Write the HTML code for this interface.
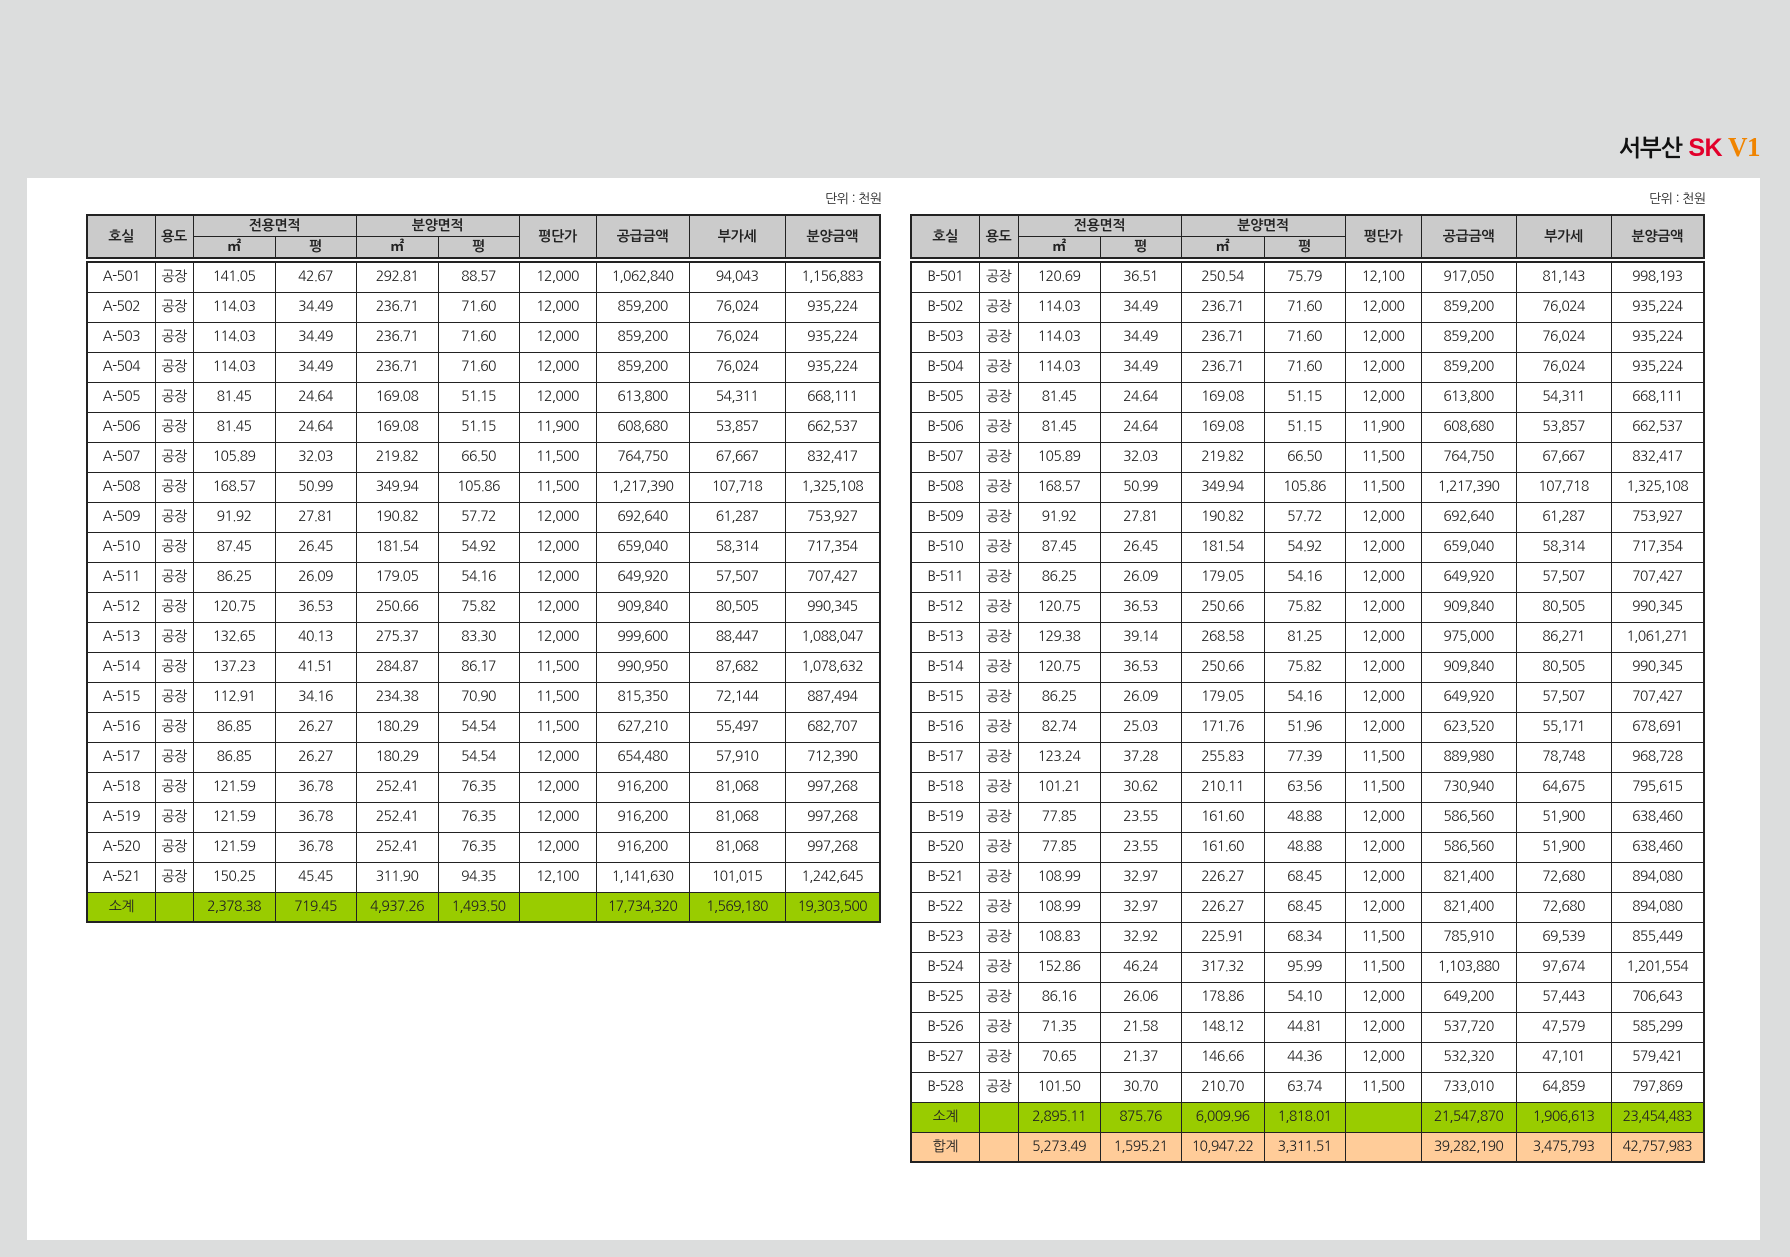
<!DOCTYPE html>
<html><head><meta charset="utf-8">
<style>
*{margin:0;padding:0;box-sizing:border-box}
html,body{width:1790px;height:1257px;background:#dcdddd;overflow:hidden;font-family:"NanumGothic","Noto Sans CJK KR","Liberation Sans",sans-serif;color:#222}
#panel{position:absolute;left:27px;top:178px;width:1733px;height:1062px;background:#fff}
#logo{position:absolute;right:30px;top:132px;font-size:23px;font-weight:bold;white-space:nowrap;letter-spacing:-0.5px}
#logo .k{color:#111}
#logo .sk{color:#e2002b;font-size:25px;margin-left:6px;font-family:"Liberation Sans",sans-serif}
#logo .v{color:#f08400;font-family:"Liberation Serif",serif;font-size:27px}
.unit{position:absolute;font-size:13px;top:191px;letter-spacing:-0.5px}
table{position:absolute;border-collapse:collapse;table-layout:fixed;font-size:14px;letter-spacing:-0.7px}
td{border:1px solid #222;text-align:center;vertical-align:middle;height:30px;padding:0;white-space:nowrap;line-height:1}
.h td{background:#cbcbcb;font-weight:bold;font-size:14px;height:21.5px;letter-spacing:-0.3px}
table{border:2px solid #222}
.g td{background:#99cc00}
.o td{background:#ffcc99}
</style></head><body>
<div id="logo"><span class="k">서부산</span><span class="sk">SK</span> <span class="v">V1</span></div>
<div id="panel"></div>
<div class="unit" style="left:825px">단위 : 천원</div>
<div class="unit" style="left:1649px">단위 : 천원</div>
<div id="out"></div>
<script>
const L=[86,154,192,274,355,437,518,595,688,784,879];
const R=[910,978,1017,1099,1180,1263,1344,1420,1515,1610,1703];
function cg(c){let s='<colgroup>';for(let i=0;i<10;i++)s+=`<col style="width:${c[i+1]-c[i]}px">`;return s+'</colgroup>';}
function head(c){return `<table class="h" style="left:${c[0]}px;top:214px;width:${c[10]-c[0]+1}px;height:44px">${cg(c)}<tr><td rowspan=2>호실</td><td rowspan=2>용도</td><td colspan=2>전용면적</td><td colspan=2>분양면적</td><td rowspan=2>평단가</td><td rowspan=2>공급금액</td><td rowspan=2>부가세</td><td rowspan=2>분양금액</td></tr><tr><td>㎡</td><td>평</td><td>㎡</td><td>평</td></tr></table>`;}
function body(c,rows){let s=`<table style="left:${c[0]}px;top:261px;width:${c[10]-c[0]+1}px">${cg(c)}`;
for(const r of rows){const a=r.split(' ');let cls='';if(a[0]=='소계')cls='g';if(a[0]=='합계')cls='o';
let cells=cls?[a[0],'',a[1],a[2],a[3],a[4],'',a[5],a[6],a[7]]:[a[0],'공장',...a.slice(1)];
s+=`<tr class="${cls}">`+cells.map(x=>`<td>${x}</td>`).join('')+'</tr>';}
return s+'</table>';}
const A=`A-501 141.05 42.67 292.81 88.57 12,000 1,062,840 94,043 1,156,883
A-502 114.03 34.49 236.71 71.60 12,000 859,200 76,024 935,224
A-503 114.03 34.49 236.71 71.60 12,000 859,200 76,024 935,224
A-504 114.03 34.49 236.71 71.60 12,000 859,200 76,024 935,224
A-505 81.45 24.64 169.08 51.15 12,000 613,800 54,311 668,111
A-506 81.45 24.64 169.08 51.15 11,900 608,680 53,857 662,537
A-507 105.89 32.03 219.82 66.50 11,500 764,750 67,667 832,417
A-508 168.57 50.99 349.94 105.86 11,500 1,217,390 107,718 1,325,108
A-509 91.92 27.81 190.82 57.72 12,000 692,640 61,287 753,927
A-510 87.45 26.45 181.54 54.92 12,000 659,040 58,314 717,354
A-511 86.25 26.09 179.05 54.16 12,000 649,920 57,507 707,427
A-512 120.75 36.53 250.66 75.82 12,000 909,840 80,505 990,345
A-513 132.65 40.13 275.37 83.30 12,000 999,600 88,447 1,088,047
A-514 137.23 41.51 284.87 86.17 11,500 990,950 87,682 1,078,632
A-515 112.91 34.16 234.38 70.90 11,500 815,350 72,144 887,494
A-516 86.85 26.27 180.29 54.54 11,500 627,210 55,497 682,707
A-517 86.85 26.27 180.29 54.54 12,000 654,480 57,910 712,390
A-518 121.59 36.78 252.41 76.35 12,000 916,200 81,068 997,268
A-519 121.59 36.78 252.41 76.35 12,000 916,200 81,068 997,268
A-520 121.59 36.78 252.41 76.35 12,000 916,200 81,068 997,268
A-521 150.25 45.45 311.90 94.35 12,100 1,141,630 101,015 1,242,645
소계 2,378.38 719.45 4,937.26 1,493.50 17,734,320 1,569,180 19,303,500`.split('\n');
const B=`B-501 120.69 36.51 250.54 75.79 12,100 917,050 81,143 998,193
B-502 114.03 34.49 236.71 71.60 12,000 859,200 76,024 935,224
B-503 114.03 34.49 236.71 71.60 12,000 859,200 76,024 935,224
B-504 114.03 34.49 236.71 71.60 12,000 859,200 76,024 935,224
B-505 81.45 24.64 169.08 51.15 12,000 613,800 54,311 668,111
B-506 81.45 24.64 169.08 51.15 11,900 608,680 53,857 662,537
B-507 105.89 32.03 219.82 66.50 11,500 764,750 67,667 832,417
B-508 168.57 50.99 349.94 105.86 11,500 1,217,390 107,718 1,325,108
B-509 91.92 27.81 190.82 57.72 12,000 692,640 61,287 753,927
B-510 87.45 26.45 181.54 54.92 12,000 659,040 58,314 717,354
B-511 86.25 26.09 179.05 54.16 12,000 649,920 57,507 707,427
B-512 120.75 36.53 250.66 75.82 12,000 909,840 80,505 990,345
B-513 129.38 39.14 268.58 81.25 12,000 975,000 86,271 1,061,271
B-514 120.75 36.53 250.66 75.82 12,000 909,840 80,505 990,345
B-515 86.25 26.09 179.05 54.16 12,000 649,920 57,507 707,427
B-516 82.74 25.03 171.76 51.96 12,000 623,520 55,171 678,691
B-517 123.24 37.28 255.83 77.39 11,500 889,980 78,748 968,728
B-518 101.21 30.62 210.11 63.56 11,500 730,940 64,675 795,615
B-519 77.85 23.55 161.60 48.88 12,000 586,560 51,900 638,460
B-520 77.85 23.55 161.60 48.88 12,000 586,560 51,900 638,460
B-521 108.99 32.97 226.27 68.45 12,000 821,400 72,680 894,080
B-522 108.99 32.97 226.27 68.45 12,000 821,400 72,680 894,080
B-523 108.83 32.92 225.91 68.34 11,500 785,910 69,539 855,449
B-524 152.86 46.24 317.32 95.99 11,500 1,103,880 97,674 1,201,554
B-525 86.16 26.06 178.86 54.10 12,000 649,200 57,443 706,643
B-526 71.35 21.58 148.12 44.81 12,000 537,720 47,579 585,299
B-527 70.65 21.37 146.66 44.36 12,000 532,320 47,101 579,421
B-528 101.50 30.70 210.70 63.74 11,500 733,010 64,859 797,869
소계 2,895.11 875.76 6,009.96 1,818.01 21,547,870 1,906,613 23,454,483
합계 5,273.49 1,595.21 10,947.22 3,311.51 39,282,190 3,475,793 42,757,983`.split('\n');
document.getElementById('out').innerHTML=head(L)+body(L,A)+head(R)+body(R,B);
</script>
</body></html>
